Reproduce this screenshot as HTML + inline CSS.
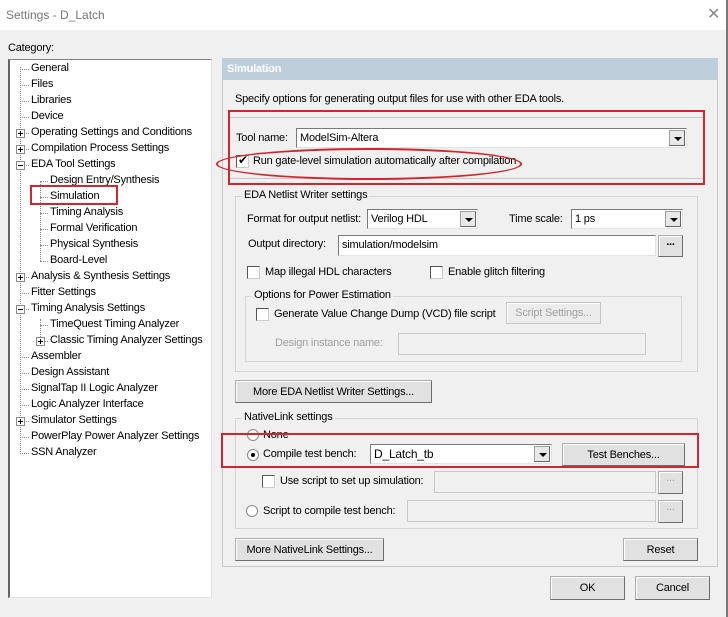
<!DOCTYPE html>
<html><head><style>
*{box-sizing:border-box;margin:0;padding:0}
body{width:728px;height:617px;background:#f0f0f0;font-family:"Liberation Sans",sans-serif;font-size:11px;letter-spacing:-0.2px;color:#000;position:relative;overflow:hidden}
.a{position:absolute;white-space:nowrap}
.tb{background:#fff}
.in{position:absolute;background:#fff;border:1px solid #7a7a7a;border-right-color:#e3e3e3;border-bottom-color:#e3e3e3}
.dis{background:#f0f0f0;border:1px solid #c8c8c8}
.btn{position:absolute;background:#e1e1e1;border:1px solid #adadad;border-right-color:#6d6d6d;border-bottom-color:#6d6d6d;text-align:center;box-shadow:inset 1px 1px 0 #fff}
.dd{position:absolute;right:1px;top:1px;bottom:1px;width:16px;background:#e8e8e8;border:1px solid #a0a0a0;border-right-color:#666;border-bottom-color:#666}
.dd:after{content:"";position:absolute;left:4px;top:6px;border:4px solid transparent;border-top:4px solid #000;border-bottom:0}
.grp{position:absolute;border:1px solid #d5d5d5}
.lg{position:absolute;background:#f0f0f0;padding:0 2px;top:-8px;left:6px}
.cb{position:absolute;width:13px;height:13px;background:#fff;border:1px solid #555;border-right-color:#ccc;border-bottom-color:#ccc}
.rb{position:absolute;width:12px;height:12px;border-radius:50%;background:#fff;border:1px solid #888}
.red{position:absolute;border:2px solid #d0262d}
.t{position:absolute;white-space:nowrap;font-size:11px}
.pl{position:absolute;width:9px;height:9px;border:1px solid #888;background:#fff}
.pl:before{content:"";position:absolute;left:1px;top:3px;width:5px;height:1px;background:#000}
.pl.p:after{content:"";position:absolute;left:3px;top:1px;width:1px;height:5px;background:#000}
.dot{position:absolute;border-top:1px dotted #888;width:8px}
</style></head><body>
<div class="a tb" style="left:0;top:0;width:727px;height:30px"></div>
<div class="a" style="left:6px;top:8px;font-size:12px;color:#777;letter-spacing:0">Settings - D_Latch</div>
<div class="a" style="left:707px;top:4px;font-size:16px;color:#888">✕</div>
<div class="a" style="left:726px;top:0;width:2px;height:617px;background:#777"></div>
<div class="a" style="left:8px;top:42px">Category:</div>
<div class="a" style="left:8px;top:59px;width:204px;height:539px;background:#fff;border:1px solid #828282;border-right-color:#e3e3e3;border-bottom-color:#e3e3e3;border-left:2px solid #646464"></div>
<div class="a" style="left:20px;top:67px;height:385px;border-left:1px dotted #888"></div>
<div class="a" style="left:40px;top:181px;height:80px;border-left:1px dotted #888"></div>
<div class="a" style="left:40px;top:319px;height:22px;border-left:1px dotted #888"></div>
<div id="tree"></div>
<script>
var items=[[0,"General"],[0,"Files"],[0,"Libraries"],[0,"Device"],[0,"Operating Settings and Conditions","p"],[0,"Compilation Process Settings","p"],[0,"EDA Tool Settings","m"],[1,"Design Entry/Synthesis"],[1,"Simulation"],[1,"Timing Analysis"],[1,"Formal Verification"],[1,"Physical Synthesis"],[1,"Board-Level"],[0,"Analysis & Synthesis Settings","p"],[0,"Fitter Settings"],[0,"Timing Analysis Settings","m"],[1,"TimeQuest Timing Analyzer"],[1,"Classic Timing Analyzer Settings","p"],[0,"Assembler"],[0,"Design Assistant"],[0,"SignalTap II Logic Analyzer"],[0,"Logic Analyzer Interface"],[0,"Simulator Settings","p"],[0,"PowerPlay Power Analyzer Settings"],[0,"SSN Analyzer"]];
var h="";items.forEach(function(it,i){var y=62+i*16;var x=it[0]?50:31;var lx=it[0]?40:20;
h+='<div class="dot" style="left:'+lx+'px;top:'+(y+7)+'px;width:'+(x-lx-2)+'px"></div>';
if(it[2])h+='<div class="pl '+(it[2]=="p"?"p":"")+'" style="left:'+(lx-4)+'px;top:'+(y+3)+'px"></div>';
h+='<div class="t" style="left:'+x+'px;top:'+y+'px">'+it[1].replace("&","&amp;")+'</div>';});
document.getElementById("tree").innerHTML=h;
</script>
<div class="red" style="left:30px;top:185px;width:88px;height:20px"></div>

<div class="a" style="left:222px;top:58px;width:496px;height:509px;border:1px solid #c8c8c8"></div>
<div class="a" style="left:222px;top:58px;width:496px;height:22px;background:#bfcedb;color:#fff;font-weight:bold;padding:5px 0 0 5px">Simulation</div>
<div class="a" style="left:235px;top:93px">Specify options for generating output files for use with other EDA tools.</div>
<div class="a" style="left:229px;top:117px;width:476px;border-top:1px solid #c8c8c8"></div>
<div class="a" style="left:236px;top:132px">Tool name:</div>
<div class="in" style="left:296px;top:128px;width:391px;height:20px"><span class="a" style="left:3px;top:3px">ModelSim-Altera</span><div class="dd"></div></div>
<div class="cb" style="left:236px;top:155px"><span class="a" style="left:1px;top:-3px;font-size:12px">✔</span></div>
<div class="a" style="left:253px;top:155px">Run gate-level simulation automatically after compilation</div>
<div class="a" style="left:229px;top:178px;width:476px;border-top:1px solid #c8c8c8"></div>
<div class="red" style="left:228px;top:110px;width:477px;height:75px"></div>
<div class="a" style="left:216px;top:148px;width:306px;height:32px;border:2px solid #d0262d;border-radius:50%"></div>

<div class="grp" style="left:235px;top:196px;width:463px;height:176px"><span class="lg">EDA Netlist Writer settings</span></div>
<div class="a" style="left:247px;top:213px">Format for output netlist:</div>
<div class="in" style="left:367px;top:209px;width:111px;height:20px"><span class="a" style="left:3px;top:3px">Verilog HDL</span><div class="dd"></div></div>
<div class="a" style="left:509px;top:213px">Time scale:</div>
<div class="in" style="left:571px;top:209px;width:112px;height:20px"><span class="a" style="left:3px;top:3px">1 ps</span><div class="dd"></div></div>
<div class="a" style="left:248px;top:238px">Output directory:</div>
<div class="in" style="left:338px;top:235px;width:318px;height:21px"><span class="a" style="left:3px;top:3px">simulation/modelsim</span></div>
<div class="btn" style="left:658px;top:235px;width:25px;height:22px;font-weight:bold">...</div>
<div class="cb" style="left:247px;top:266px"></div><div class="a" style="left:265px;top:266px">Map illegal HDL characters</div>
<div class="cb" style="left:430px;top:266px"></div><div class="a" style="left:448px;top:266px">Enable glitch filtering</div>
<div class="grp" style="left:245px;top:296px;width:437px;height:66px"><span class="lg">Options for Power Estimation</span></div>
<div class="cb" style="left:256px;top:308px"></div><div class="a" style="left:274px;top:308px">Generate Value Change Dump (VCD) file script</div>
<div class="btn" style="left:506px;top:302px;width:95px;height:22px;padding-top:4px;color:#a0a0a0;background:#ececec;border-color:#c5c5c5">Script Settings...</div>
<div class="a" style="left:275px;top:337px;color:#a0a0a0">Design instance name:</div>
<div class="in dis" style="left:398px;top:333px;width:248px;height:22px"></div>
<div class="btn" style="left:235px;top:380px;width:197px;height:23px;padding-top:5px">More EDA Netlist Writer Settings...</div>

<div class="grp" style="left:235px;top:418px;width:463px;height:111px"><span class="lg">NativeLink settings</span></div>
<div class="rb" style="left:247px;top:429px"></div><div class="a" style="left:263px;top:429px">None</div>
<div class="rb" style="left:247px;top:449px"><span class="a" style="left:3px;top:3px;width:4px;height:4px;border-radius:50%;background:#000"></span></div>
<div class="a" style="left:263px;top:448px">Compile test bench:</div>
<div class="in" style="left:370px;top:444px;width:182px;height:20px"><span class="a" style="left:3px;top:2px;font-size:12px">D_Latch_tb</span><div class="dd"></div></div>
<div class="btn" style="left:562px;top:443px;width:123px;height:23px;padding-top:5px">Test Benches...</div>
<div class="red" style="left:221px;top:433px;width:478px;height:35px"></div>
<div class="cb" style="left:262px;top:475px"></div><div class="a" style="left:280px;top:475px">Use script to set up simulation:</div>
<div class="in dis" style="left:434px;top:471px;width:222px;height:22px"></div>
<div class="btn" style="left:658px;top:471px;width:25px;height:23px;color:#a0a0a0">...</div>
<div class="rb" style="left:246px;top:505px"></div><div class="a" style="left:263px;top:505px">Script to compile test bench:</div>
<div class="in dis" style="left:407px;top:500px;width:249px;height:22px"></div>
<div class="btn" style="left:658px;top:500px;width:25px;height:23px;color:#a0a0a0">...</div>
<div class="btn" style="left:235px;top:538px;width:149px;height:23px;padding-top:5px">More NativeLink Settings...</div>
<div class="btn" style="left:623px;top:538px;width:75px;height:23px;padding-top:5px">Reset</div>
<div class="btn" style="left:550px;top:576px;width:75px;height:24px;padding-top:5px">OK</div>
<div class="btn" style="left:635px;top:576px;width:75px;height:24px;padding-top:5px">Cancel</div>
</body></html>
